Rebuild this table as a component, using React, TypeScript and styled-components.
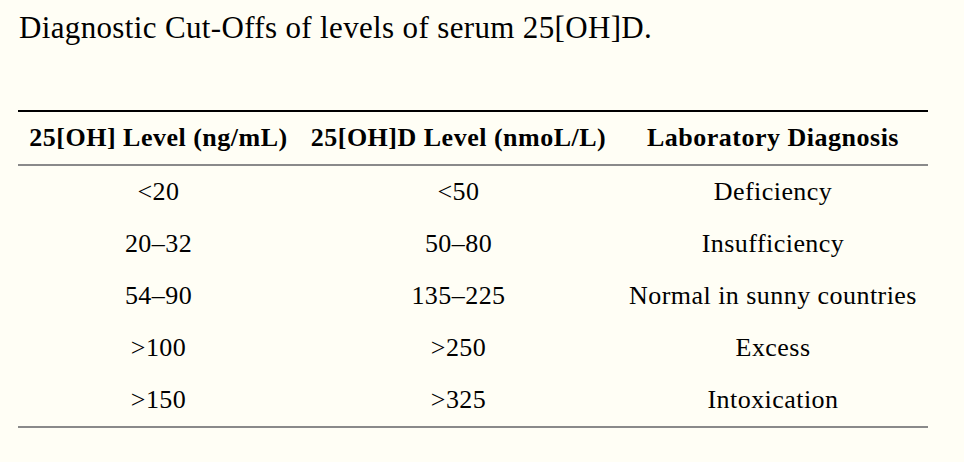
import styled, { createGlobalStyle } from 'styled-components'

const GlobalStyle = createGlobalStyle`
    html, body {
        margin: 0;
        padding: 0;
        background: #fffef5;
    }
    body {
        font-family: "Liberation Serif", "Times New Roman", serif;
        color: #000;
    }
`

const Page = styled.div`
    width: 964px;
    height: 462px;
    padding: 10px 0 0 18px;
    box-sizing: border-box;
    background: #fffef5;
`

const Title = styled.h1`
    margin: 0;
    padding-left: 1px;
    font-size: 31px;
    font-weight: normal;
    letter-spacing: 0.35px;
    line-height: 36px;
`

const Table = styled.table`
    margin-top: 64px;
    width: 910px;
    border-collapse: collapse;
    border-top: 2px solid #000;
    border-bottom: 2px solid #8a8a8a;
    font-family: "Liberation Serif", "Times New Roman", serif;
`

const HeadRow = styled.tr`
    border-bottom: 2px solid #8a8a8a;
`

const HeadCell = styled.th<{ w: number }>`
    width: ${props => props.w}px;
    height: 52px;
    padding: 0;
    font-size: 26px;
    font-weight: bold;
    letter-spacing: 0.5px;
    text-align: center;
    vertical-align: middle;
    white-space: nowrap;
`

const Cell = styled.td`
    height: 52px;
    padding: 0;
    font-size: 26px;
    letter-spacing: 0.45px;
    text-align: center;
    vertical-align: middle;
    white-space: nowrap;
`

const rows = [
    ['<20', '<50', 'Deficiency'],
    ['20–32', '50–80', 'Insufficiency'],
    ['54–90', '135–225', 'Normal in sunny countries'],
    ['>100', '>250', 'Excess'],
    ['>150', '>325', 'Intoxication'],
]

export default function App() {
    return (
        <Page>
            <GlobalStyle />
            <Title>Diagnostic Cut-Offs of levels of serum 25[OH]D.</Title>
            <Table>
                <thead>
                    <HeadRow>
                        <HeadCell w={281}>25[OH] Level (ng/mL)</HeadCell>
                        <HeadCell w={319}>25[OH]D Level (nmoL/L)</HeadCell>
                        <HeadCell w={310}>Laboratory Diagnosis</HeadCell>
                    </HeadRow>
                </thead>
                <tbody>
                    {rows.map((row, idx) => (
                        <tr key={idx}>
                            {row.map((value, i) => <Cell key={i}>{value}</Cell>)}
                        </tr>
                    ))}
                </tbody>
            </Table>
        </Page>
    )
}
